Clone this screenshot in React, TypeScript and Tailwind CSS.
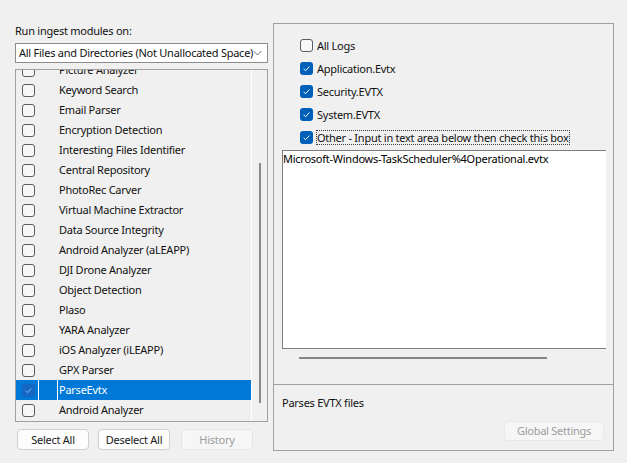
import React from 'react';

const modules = [
  'Picture Analyzer',
  'Keyword Search',
  'Email Parser',
  'Encryption Detection',
  'Interesting Files Identifier',
  'Central Repository',
  'PhotoRec Carver',
  'Virtual Machine Extractor',
  'Data Source Integrity',
  'Android Analyzer (aLEAPP)',
  'DJI Drone Analyzer',
  'Object Detection',
  'Plaso',
  'YARA Analyzer',
  'iOS Analyzer (iLEAPP)',
  'GPX Parser',
  'ParseEvtx',
  'Android Analyzer',
];

const logs = [
  { label: 'All Logs', checked: false },
  { label: 'Application.Evtx', checked: true },
  { label: 'Security.EVTX', checked: true },
  { label: 'System.EVTX', checked: true },
  { label: 'Other - Input in text area below then check this box', checked: true, focus: true },
];

function Check({ checked, dim }: { checked: boolean; dim?: boolean }) {
  if (checked) {
    return (
      <span
        className={`flex h-[13px] w-[13px] items-center justify-center rounded-[3px] ${
          dim ? 'bg-[#1467c2]' : 'bg-[#005fb8]'
        }`}
      >
        <svg width="9" height="9" viewBox="0 0 9 9" fill="none">
          <path d="M1.6 4.8l2 1.9 3.8-4.2" stroke={dim ? '#8fb8e6' : '#ffffff'} strokeWidth="1" />
        </svg>
      </span>
    );
  }
  return <span className="block h-[13px] w-[13px] rounded-[3px] border border-[#5d5d5d] bg-[#f7f7f7]" />;
}

export default function App() {
  return (
    <div
      className="flex h-[463px] w-[627px] overflow-hidden whitespace-nowrap bg-[#f0f0f0] text-[11px] tracking-[-0.25px] text-[#111111]"
      style={{ fontFamily: '"Segoe UI", "Noto Sans", sans-serif' }}
    >
      {/* Left column */}
      <div className="ml-[15px] flex w-[253px] flex-col pt-[23px]">
        <div className="h-[16px] leading-[16px]">Run ingest modules on:</div>
        <div className="mt-[4px] flex h-[20px] items-center justify-between border border-[#8c8c8c] bg-white pl-[3px] pr-[5px]">
          <span className="leading-[16px]">All Files and Directories (Not Unallocated Space)</span>
          <svg width="9" height="6" viewBox="0 0 9 6" fill="none">
            <path d="M0.5 1l4 4 4-4" stroke="#6b6b6b" strokeWidth="1" />
          </svg>
        </div>

        {/* Module list */}
        <div className="mt-[6px] flex h-[353px] overflow-hidden border border-[#a0a0a0]">
          <div className="w-[235px] overflow-hidden">
            <div className="-mt-[10px]">
              {modules.map((m) => {
                const sel = m === 'ParseEvtx';
                return (
                  <div
                    key={m}
                    className={`flex h-[20px] items-center ${sel ? 'bg-[#0078d7] text-white' : ''}`}
                  >
                    <div className="flex w-[22px] justify-center pl-[3px]">
                      <Check checked={sel} dim />
                    </div>
                    <div className={`h-full w-[19px] border-l ${sel ? 'border-white' : 'border-transparent'}`} />
                    <div className={`h-full flex-1 border-l pl-[1px] leading-[20px] ${sel ? 'border-white' : 'border-transparent'}`}>
                      {m}
                    </div>
                  </div>
                );
              })}
            </div>
          </div>
          <div className="flex flex-1 justify-center border-l border-white pt-[93px]">
            <div className="h-[240px] w-[2px] bg-[#8a8a8a]" />
          </div>
        </div>

        <div className="mt-[7px] flex gap-[9px] pl-[2px]">
          <button className="h-[21px] w-[72px] rounded-[4px] border border-[#d0d0d0] bg-[#fdfdfd] leading-[19px] text-[#1a1a1a]">
            Select All
          </button>
          <button className="h-[21px] w-[72px] rounded-[4px] border border-[#d0d0d0] bg-[#fdfdfd] leading-[19px] text-[#1a1a1a]">
            Deselect All
          </button>
          <button className="ml-[2px] h-[21px] w-[72px] rounded-[4px] border border-[#e5e5e5] bg-[#f6f6f6] leading-[19px] text-[#9d9d9d]">
            History
          </button>
        </div>
      </div>

      {/* Right panel */}
      <div className="ml-[5px] mt-[23px] flex h-[428px] w-[341px] flex-col border border-[#a0a0a0]">
        <div className="flex flex-col pl-[26px] pt-[10px]">
          {logs.map((l) => (
            <div key={l.label} className="flex h-[23px] items-center">
              <Check checked={l.checked} />
              <span
                className={`ml-[3px] leading-[13px] ${
                  l.focus ? 'border border-dotted border-[#3a3a3a]' : 'border border-transparent'
                }`}
              >
                {l.label}
              </span>
            </div>
          ))}
        </div>
        <div className="ml-[8px] mt-[1px] h-[199px] w-[324px] border-y border-l border-[#7e7e7e] bg-white leading-[16px] text-black">
          Microsoft-Windows-TaskScheduler%4Operational.evtx
        </div>
        <div className="ml-[25px] mt-[8px] h-[2px] w-[248px] bg-[#858585]" />
        <div className="mt-[25px] border-t border-[#a0a0a0] pl-[8px] pt-[10px]">
          <div className="leading-[16px]">Parses EVTX files</div>
          <div className="mt-[10px] flex justify-end pr-[9px]">
            <button className="h-[20px] w-[100px] rounded-[4px] border border-[#e8e8e8] bg-[#f6f6f6] leading-[18px] text-[#9d9d9d]">
              Global Settings
            </button>
          </div>
        </div>
      </div>
    </div>
  );
}
